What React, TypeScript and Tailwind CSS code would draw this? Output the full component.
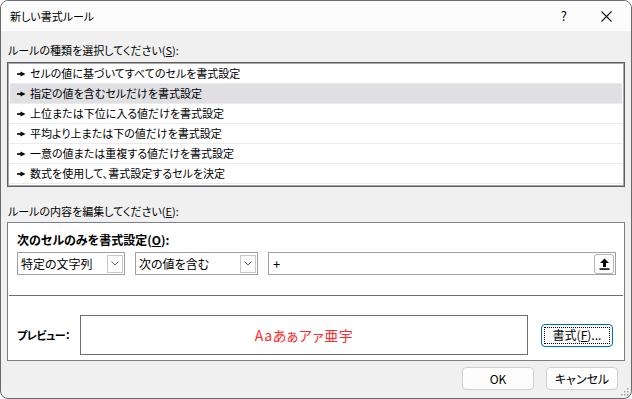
import React from "react";

const rules = [
  "セルの値に基づいてすべてのセルを書式設定",
  "指定の値を含むセルだけを書式設定",
  "上位または下位に入る値だけを書式設定",
  "平均より上または下の値だけを書式設定",
  "一意の値または重複する値だけを書式設定",
  "数式を使用して、書式設定するセルを決定",
];

const Arrow = () => (
  <svg width="9" height="6" viewBox="0 0 9 6" className="shrink-0">
    <rect x="0" y="2.2" width="4" height="1.6" fill="#000" />
    <polygon points="3.5,0.5 8.5,3 3.5,5.5" fill="#000" />
  </svg>
);

const Chevron = () => (
  <div className="w-[16px] h-[18px] border border-[#c9c9c9] bg-white flex items-center justify-center">
    <svg width="8" height="5" viewBox="0 0 8 5">
      <polyline points="0.5,0.5 4,4 7.5,0.5" fill="none" stroke="#606060" strokeWidth="1" />
    </svg>
  </div>
);

const Select = ({ label, width }: { label: string; width: string }) => (
  <div className={`${width} h-[23px] border border-[#a0a0a0] bg-white flex items-center justify-between pl-[3px] pr-[1px]`}>
    <span className="text-[12px] leading-none">{label}</span>
    <Chevron />
  </div>
);

const Btn = (props: any) => (
  <div className="w-[72px] h-[23px] rounded-[4px] border border-[#d0d0d0] bg-[#fdfdfd] flex items-center justify-center text-[12px]">
    {props.children}
  </div>
);

export default function App() {
  return (
    <div className="w-[632px] h-[399px] bg-[#f0f0f0] border border-[#6a6a6a] rounded-[8px] overflow-hidden flex flex-col text-black font-['Noto_Sans_CJK_JP',sans-serif] [font-feature-settings:'palt'] relative">
      {/* title bar */}
      <div className="h-[30px] bg-[#fbfbfb] flex items-center pl-[9px] shrink-0">
        <span className="text-[11px]">新しい書式ルール</span>
        <span className="ml-auto text-[13px] mr-[34px]">?</span>
        <svg width="11" height="11" viewBox="0 0 11 11" className="mr-[19px]">
          <path d="M0.5 0.5 L10.5 10.5 M10.5 0.5 L0.5 10.5" stroke="#1a1a1a" strokeWidth="1.1" />
        </svg>
      </div>

      <div className="flex flex-col px-[6px]">
        <div className="mt-[11px] h-[16px] text-[11px] leading-[16px] pl-[1px]">
          ルールの種類を選択してください(<span className="underline">S</span>):
        </div>

        {/* rule type list */}
        <div className="mt-[4px] w-[618px] h-[125px] border border-[#5f5f5f] shadow-[inset_0_0_0_1px_#a8a8a8] bg-white pt-[1px] pl-[2px] pr-[2px]">
          {rules.map((r, i) => (
            <div
              key={r}
              className={`h-[20px] flex items-center pl-[7px] gap-[4px] border-b border-[#ebebeb] ${i === 1 ? "bg-[#e0dfe3]" : ""}`}
            >
              <Arrow />
              <span className="text-[11px] leading-none">{r}</span>
            </div>
          ))}
        </div>

        <div className="mt-[16px] h-[16px] text-[11px] leading-[16px] pl-[1px]">
          ルールの内容を編集してください(<span className="underline">E</span>):
        </div>

        {/* rule description */}
        <div className="mt-[3px] w-[618px] h-[139px] border border-[#7a7f86] bg-white flex flex-col">
          <div className="mt-[9px] pl-[9px] h-[16px] text-[12px] leading-[16px] font-bold">
            次のセルのみを書式設定(<span className="underline">O</span>):
          </div>
          <div className="mt-[4px] pl-[9px] flex items-center gap-[10px]">
            <Select label="特定の文字列" width="w-[108px]" />
            <Select label="次の値を含む" width="w-[123px]" />
            <div className="w-[348px] h-[23px] border border-[#a0a0a0] bg-white flex items-center justify-between pl-[4px] pr-[1px]">
              <span className="text-[13px] leading-none">+</span>
              <div className="w-[20px] h-[20px] rounded-[3px] border border-[#b4b4b4] bg-white flex items-center justify-center">
                <svg width="11" height="12" viewBox="0 0 11 12">
                  <polygon points="5.5,0.5 10,5 7,5 7,9 4,9 4,5 1,5" fill="#000" />
                  <rect x="0.5" y="10.3" width="10" height="1.5" fill="#000" />
                </svg>
              </div>
            </div>
          </div>
          <div className="mt-[20px] mx-[1px] h-px bg-[#6d6d6d]" />
          <div className="mt-[19px] pl-[9px] flex items-center">
            <span className="w-[63px] text-[11px] font-bold tracking-[-0.5px]">プレビュー：</span>
            <div className="w-[448px] h-[40px] border border-[#6d6d6d] flex items-center justify-center">
              <span className="text-[14px] text-[#ff2a2a] tracking-[0.5px]">Aaあぁアァ亜宇</span>
            </div>
            <div className="ml-[13px] w-[72px] h-[23px] rounded-[4px] border border-[#0067c0] bg-[#fdfdfd] p-[2px]">
              <div className="w-full h-full border border-dotted border-black flex items-center justify-center text-[12px]">
                書式(<span className="underline">F</span>)...
              </div>
            </div>
          </div>
        </div>

        {/* footer buttons */}
        <div className="mt-[6px] flex justify-end gap-[12px] pr-[7px]">
          <Btn>OK</Btn>
          <Btn>キャンセル</Btn>
        </div>
      </div>

      {/* resize grip */}
      <svg width="8" height="8" viewBox="0 0 8 8" className="absolute right-[2px] bottom-[2px]">
        {[
          [6, 0],
          [3, 3],
          [6, 3],
          [0, 6],
          [3, 6],
          [6, 6],
        ].map(([x, y]) => (
          <rect key={`${x}-${y}`} x={x} y={y} width="1.5" height="1.5" fill="#a0a0a0" />
        ))}
      </svg>
    </div>
  );
}
